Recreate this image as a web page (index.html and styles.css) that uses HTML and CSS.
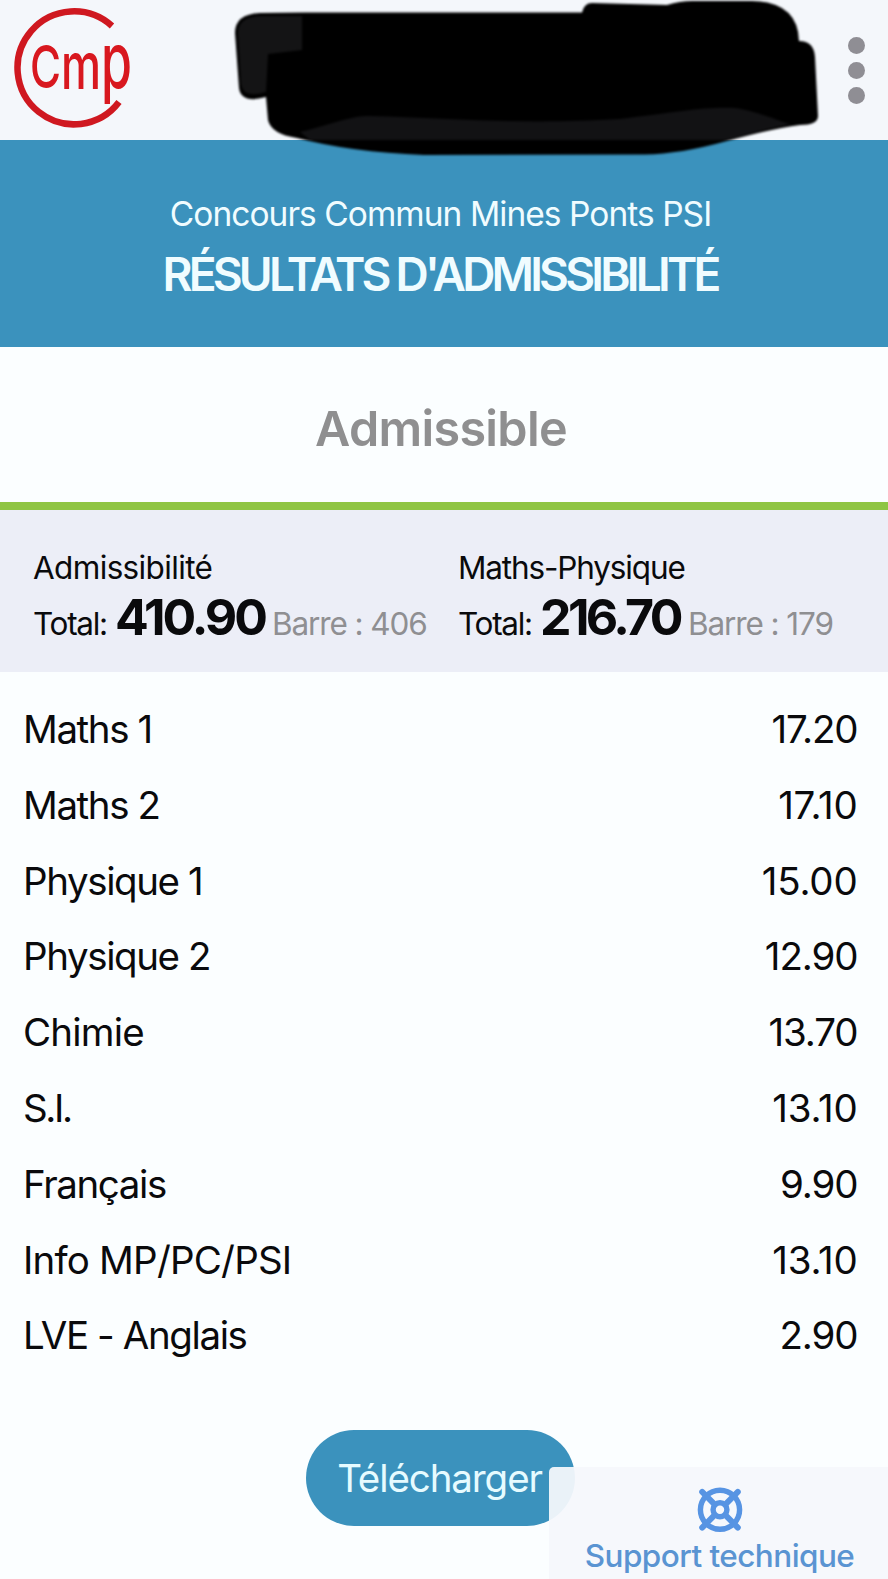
FILE: index.html
```html
<!DOCTYPE html>
<html lang="fr">
<head>
  <meta charset="UTF-8" />
  <meta name="viewport" content="width=device-width, initial-scale=1.0"/>
  <title>Résultats d'admissibilité</title>
  <link rel="stylesheet" href="styles.css">
</head>
<body>
  <header class="topbar">
    <svg class="logo" width="122" height="122" viewBox="13 8 122 122">
      <path d="M112 26 A56.5 56.5 0 1 0 119 102" fill="none" stroke="#cf1820" stroke-width="6.5"/>
      <g class="logo-text">
        <text x="30" y="88" font-size="59" textLength="31" lengthAdjust="spacingAndGlyphs">C</text>
        <text x="61" y="89" font-size="64" textLength="40" lengthAdjust="spacingAndGlyphs">m</text>
        <text x="101" y="88" font-size="77" textLength="31" lengthAdjust="spacingAndGlyphs">p</text>
      </g>
    </svg>
    <div class="menu"><span></span><span></span><span></span></div>
    <svg class="mask" width="600" height="165" viewBox="225 0 600 165">
      <path fill="#000" d="M235 33 Q235 14 260 13 L305 12.500 L582 12.500 Q584 3 592 3 L667 5 Q680 1 692 1 L752 1 Q798 2 799 41 Q814 41 815 57 L818 116 Q818 125 800 125 Q775 128 727 141 Q680 154 645 154.500 L424 155 Q350 152 297 138 Q271 134 268 120 L266 97 Q241 104 239 88 Z"/>
      <path fill="#121214" d="M300 132 C340 122 350 116 370 116 C450 118 520 125 620 119 C680 112 700 107 735 108 C760 112 775 120 790 124 Q770 128 728 140 L310 140 Z"/>
      <path fill="#141415" d="M238 33 Q238 17 260 16 L302 16 L302 50 L268 54 L266 92 Q243 99 241 84 Z"/>
    </svg>
  </header>

  <section class="banner">
    <div class="contest">Concours Commun Mines Ponts PSI</div>
    <h1>RÉSULTATS D'ADMISSIBILITÉ</h1>
  </section>

  <section class="status">Admissible</section>

  <section class="totals">
    <div class="total">
      <div class="name name-adm">Admissibilité</div>
      <div class="line"><span class="label">Total:</span><strong class="score-adm">410.90</strong><span class="barre">Barre : 406</span></div>
    </div>
    <div class="total">
      <div class="name">Maths-Physique</div>
      <div class="line"><span class="label">Total:</span><strong class="score-mp">216.70</strong><span class="barre">Barre : 179</span></div>
    </div>
  </section>

  <section class="notes">
    <div class="row"><span>Maths 1</span><span class="note">17.20</span></div>
    <div class="row"><span>Maths 2</span><span class="note wide">17.10</span></div>
    <div class="row"><span>Physique 1</span><span class="note wide">15.00</span></div>
    <div class="row"><span>Physique 2</span><span class="note">12.90</span></div>
    <div class="row"><span class="wide">Chimie</span><span class="note">13.70</span></div>
    <div class="row"><span class="tight">S.I.</span><span class="note wide">13.10</span></div>
    <div class="row"><span>Français</span><span class="note">9.90</span></div>
    <div class="row"><span class="wide">Info MP/PC/PSI</span><span class="note wide">13.10</span></div>
    <div class="row"><span>LVE - Anglais</span><span class="note">2.90</span></div>
  </section>

  <button class="download">Télécharger</button>

  <div class="support">
    <svg width="48" height="48" viewBox="0 0 48 48" fill="none" stroke="#5794e3">
      <circle cx="24" cy="24" r="19.800" stroke-width="5.500"/>
      <circle cx="24" cy="24" r="7" stroke-width="5.500"/>
      <path d="M6 6 L18 18 M42 6 L30 18 M6 42 L18 30 M42 42 L30 30" stroke-width="6" stroke-linecap="round"/>
    </svg>
    <span>Support technique</span>
  </div>
</body>
</html>
```
FILE: styles.css
```css
* {
  box-sizing: border-box;
}
body {
  margin: 0;
  height: 1579px;
  overflow: hidden;
  position: relative;
  font-family: Inter, 'Liberation Sans', sans-serif;
  background: #fbfeff;
  color: #0a0a0c;
}
.topbar {
  position: relative;
  display: flex;
  justify-content: space-between;
  height: 140px;
  padding: 8px 23.5px 0 13px;
  background: #f4f7fb;
}
.logo-text {
  font-family: Inter, sans-serif;
  font-weight: 500;
  fill: #d8181f;
}
.menu {
  display: flex;
  flex-direction: column;
  gap: 8px;
  padding-top: 28.5px;
}
.menu span {
  width: 17px;
  height: 17px;
  border-radius: 50%;
  background: #8f8e94;
}
.mask {
  position: absolute;
  left: 225px;
  top: 0;
  filter: blur(1.2px);
}
.banner {
  height: 207px;
  padding-top: 48px;
  background: #3b92bd;
  color: #f0fcff;
  text-align: center;
}
.contest {
  font-size: 33.5px;
  line-height: 53px;
  letter-spacing: -0.95px;
  padding-right: 7px;
}
h1 {
  margin: 0;
  padding-right: 8px;
  font-size: 46px;
  line-height: 67px;
  font-weight: 600;
  letter-spacing: -3.8px;
}
.status {
  height: 162.5px;
  border-bottom: 8px solid #8fc544;
  padding-right: 6px;
  font-size: 48.5px;
  line-height: 163px;
  font-weight: 600;
  letter-spacing: -0.7px;
  text-align: center;
  color: #8f8f90;
}
.totals {
  display: grid;
  grid-template-columns: 425px 1fr;
  height: 162px;
  padding: 36px 0 0 33px;
  background: #eceef7;
  font-size: 31.5px;
}
.name {
  line-height: 44px;
  letter-spacing: -1.15px;
}
.name-adm {
  letter-spacing: -0.65px;
}
.line {
  display: flex;
  align-items: baseline;
  padding-top: 2px;
  line-height: 50px;
  white-space: nowrap;
}
.label {
  width: 82px;
  letter-spacing: -1.3px;
}
.line strong {
  font-size: 50px;
  font-weight: 700;
  letter-spacing: -3px;
}
.score-adm {
  width: 157px;
}
.line .score-mp {
  width: 148px;
  letter-spacing: -3.6px;
}
.barre {
  color: #8f8f92;
  letter-spacing: -1.1px;
}
.notes {
  padding: 20.5px 30.5px 0 23px;
  font-size: 38.5px;
  letter-spacing: -1.4px;
}
.row {
  display: flex;
  justify-content: space-between;
  line-height: 75.8px;
}
.note {
  letter-spacing: -1.1px;
}
.wide {
  letter-spacing: -0.8px;
}
.note.wide {
  letter-spacing: -0.2px;
}
.tight {
  letter-spacing: -2.4px;
}
.download {
  display: block;
  width: 269px;
  height: 96px;
  margin: 55.5px 0 0 306px;
  padding: 0 2px 0 0;
  border: none;
  border-radius: 48px;
  background: #3b92bd;
  color: #e6fbff;
  font-family: inherit;
  font-size: 38.5px;
  letter-spacing: -1.1px;
}
/* fixed help box, drawn over the page corner */
.support {
  position: absolute;
  right: 0;
  bottom: 0;
  display: flex;
  flex-direction: column;
  align-items: center;
  width: 339px;
  height: 112px;
  padding: 18.5px 0 0 2px;
  border-top-left-radius: 5px;
  background: rgba(245, 248, 252, 0.94);
  color: #5a94d2;
  font-size: 31.5px;
  font-weight: 500;
  line-height: 46px;
  letter-spacing: -0.55px;
}
```
